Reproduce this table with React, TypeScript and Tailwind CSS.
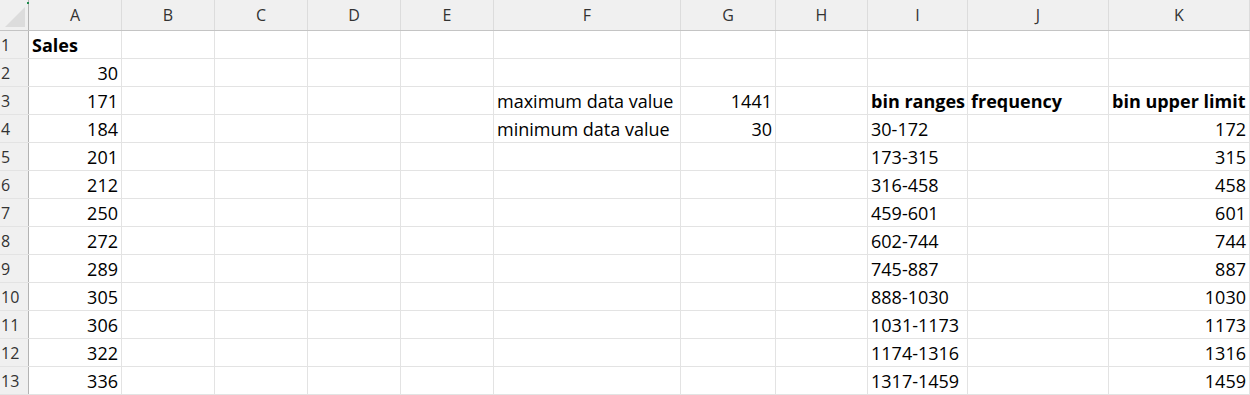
const cols = ['A', 'B', 'C', 'D', 'E', 'F', 'G', 'H', 'I', 'J', 'K']

const widths = [
  'w-[93px]',
  'w-[93px]',
  'w-[93px]',
  'w-[93px]',
  'w-[93px]',
  'w-[187px]',
  'w-[95px]',
  'w-[92px]',
  'w-[100px]',
  'w-[141px]',
  'w-[141px]',
]

type Cell = { v: string | number; bold?: boolean }

const sales = [30, 171, 184, 201, 212, 250, 272, 289, 305, 306, 322, 336]
const bins = [172, 315, 458, 601, 744, 887, 1030, 1173, 1316, 1459]

function buildRows(): Record<string, Cell>[] {
  const rows: Record<string, Cell>[] = []
  rows.push({ A: { v: 'Sales', bold: true } })
  sales.forEach((s, i) => {
    const r: Record<string, Cell> = { A: { v: s } }
    const rowNo = i + 2
    if (rowNo === 3) {
      r.F = { v: 'maximum data value' }
      r.G = { v: 1441 }
      r.I = { v: 'bin ranges', bold: true }
      r.J = { v: 'frequency', bold: true }
      r.K = { v: 'bin upper limit', bold: true }
    }
    if (rowNo === 4) {
      r.F = { v: 'minimum data value' }
      r.G = { v: 30 }
    }
    if (rowNo >= 4) {
      const b = rowNo - 4
      const lo = b === 0 ? 30 : bins[b - 1] + 1
      r.I = { v: `${lo}-${bins[b]}` }
      r.K = { v: bins[b] }
    }
    rows.push(r)
  })
  return rows
}

export default function App() {
  const rows = buildRows()
  return (
    <div className="w-[1250px] h-[395px] overflow-hidden bg-white font-['Open_Sans',sans-serif] text-black">
      {/* column headers */}
      <div className="flex h-[31px] bg-[#f0f0f0] border-b border-[#c4c4c4]">
        <div className="relative w-[29px] shrink-0 border-r border-[#b3b3b3]">
          <svg className="absolute right-[3px] bottom-[3px]" width="20" height="20" viewBox="0 0 20 20">
            <polygon points="20,0 20,20 0,20" fill="#dcdcdc" />
          </svg>
          <div className="absolute right-[-1px] top-[2px] w-[2px] h-[2px] bg-[#1e8a4c]" />
        </div>
        {cols.map((c, i) => (
          <div
            key={c}
            className={`${widths[i]} shrink-0 flex items-end justify-center pb-[3px] text-[16px] text-[#333] border-r border-[#dcdcdc]`}
          >
            {c}
          </div>
        ))}
      </div>

      {rows.map((r, ri) => (
        <div key={ri} className="flex h-[28px] border-b border-[#e3e3e3]">
          <div className="w-[29px] shrink-0 bg-[#f0f0f0] border-r border-[#b3b3b3] flex items-center pl-[1px] text-[16px] text-[#333]">
            {ri + 1}
          </div>
          {cols.map((c, i) => {
            const cell = r[c]
            const num = cell && typeof cell.v === 'number'
            return (
              <div
                key={c}
                className={`${widths[i]} shrink-0 border-r border-[#e3e3e3] flex items-center whitespace-nowrap text-[18px] leading-[28px] ${
                  num ? 'justify-end pr-[3px]' : 'justify-start pl-[3px]'
                } ${cell?.bold ? 'font-bold' : ''}`}
              >
                {cell?.v}
              </div>
            )
          })}
        </div>
      ))}
    </div>
  )
}
